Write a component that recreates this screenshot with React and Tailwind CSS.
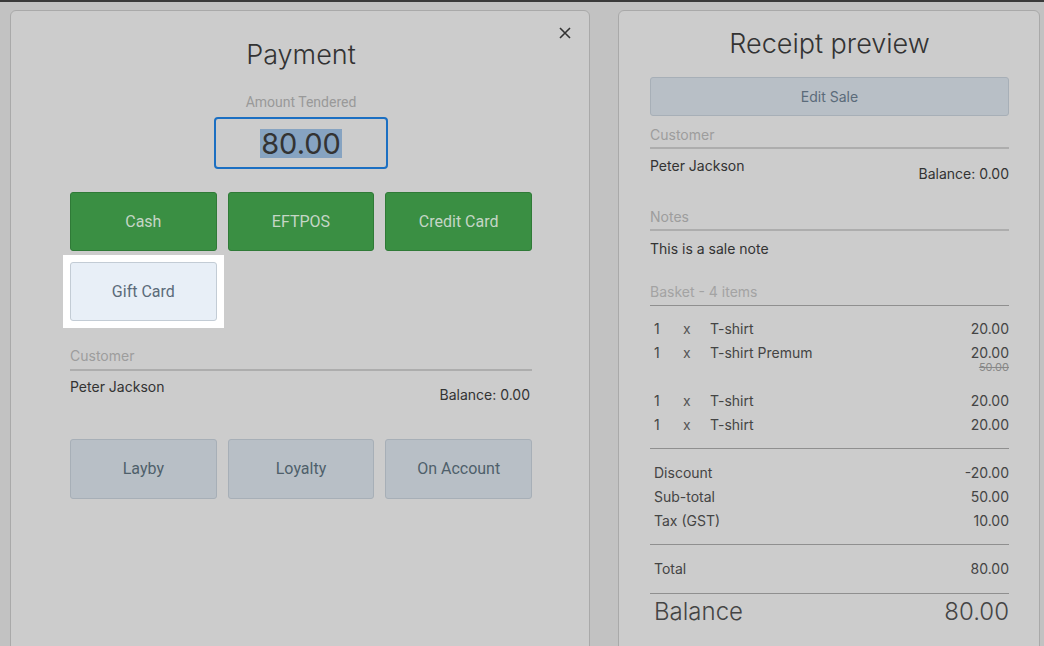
import React from "react";

const greenBtn =
  "h-[59px] rounded-[3px] bg-[#3a8f43] border border-[#2f7a37] text-[#c5d6c6] text-[16px] font-['Roboto',sans-serif] flex items-center justify-center";
const greyBtn =
  "h-[60px] rounded-[3px] bg-[#b8bfc6] border border-[#a7afb7] text-[#4f5f6b] text-[16px] font-['Roboto',sans-serif] flex items-center justify-center";

function Row({ qty, name, price, old }) {
  return (
    <div className="flex pl-[4px] text-[14px] text-[#444] leading-[24px]">
      <span className="w-[29px]">{qty}</span>
      <span className="w-[27px] text-[#555]">x</span>
      <span className="flex-1">{name}</span>
      <div className="flex flex-col items-end">
        <span>{price}</span>
        {old && (
          <span className="text-[11px] leading-[4px] text-[#888] line-through">{old}</span>
        )}
      </div>
    </div>
  );
}

function Line({ label, value }) {
  return (
    <div className="flex justify-between pl-[4px] text-[14px] text-[#444] leading-[24px]">
      <span>{label}</span>
      <span>{value}</span>
    </div>
  );
}

export default function App() {
  return (
    <div className="w-[1044px] h-[646px] overflow-hidden bg-[#c2c2c2] border-t-2 border-[#3a3a3a] font-['Inter',sans-serif]">
      <div className="flex gap-[28px] pl-[10px] pt-[8px]">
        {/* Payment panel */}
        <div className="relative w-[580px] h-[700px] rounded-[6px] bg-[#cccccc] border border-[#a9a9a9] pl-[2px] flex flex-col items-center">
          <button className="absolute right-[17px] top-[15px] w-[14px] h-[14px] flex items-center justify-center">
            <svg width="12" height="12" viewBox="0 0 12 12">
              <path d="M1 1 L11 11 M11 1 L1 11" stroke="#333" strokeWidth="1.6" />
            </svg>
          </button>
          <div className="mt-[28px] h-[32px] text-[27px] leading-[32px] font-light text-[#333]">Payment</div>
          <div className="mt-[21px] text-[14px] leading-[20px] text-[#999] font-['Roboto',sans-serif]">Amount Tendered</div>
          <div className="mt-[5px] w-[174px] h-[52px] rounded-[4px] border-2 border-[#1b6fc2] flex items-center justify-center">
            <span className="bg-[#86a3c1] text-[#333] text-[29px] leading-[29px] px-[1px]">80.00</span>
          </div>
          <div className="mt-[23px] w-[462px] grid grid-cols-3 gap-x-[11px] gap-y-[11px]">
            <div className={greenBtn}>Cash</div>
            <div className={greenBtn}>EFTPOS</div>
            <div className={greenBtn}>Credit Card</div>
            <div className="-m-[7px] bg-white p-[7px]">
              <div className="h-[59px] rounded-[3px] bg-[#e8eff7] border border-[#c3ccd5] text-[#5b6b7a] text-[16px] font-['Roboto',sans-serif] flex items-center justify-center">
                Gift Card
              </div>
            </div>
          </div>
          <div className="mt-[25px] w-[462px]">
            <div className="text-[14px] leading-[20px] text-[#9d9d9d] pb-[3px] border-b-2 border-[#adadad]">Customer</div>
            <div className="flex justify-between pt-[6px]">
              <span className="text-[14px] leading-[20px] text-[#333]">Peter Jackson</span>
              <span className="mt-[8px] pr-[2px] text-[14px] leading-[20px] text-[#333]">Balance: 0.00</span>
            </div>
          </div>
          <div className="mt-[34px] w-[462px] grid grid-cols-3 gap-x-[11px]">
            <div className={greyBtn}>Layby</div>
            <div className={greyBtn}>Loyalty</div>
            <div className={greyBtn}>On Account</div>
          </div>
        </div>

        {/* Receipt panel */}
        <div className="w-[422px] h-[700px] rounded-[6px] bg-[#cccccc] border border-[#a9a9a9] pl-[31px] pr-[30px] flex flex-col">
          <div className="mt-[17px] h-[32px] text-center text-[27px] leading-[32px] font-light text-[#333]">Receipt preview</div>
          <div className="mt-[17px] h-[39px] rounded-[3px] bg-[#b8bfc6] border border-[#a7afb7] text-[#5b6b7a] text-[14px] flex items-center justify-center">
            Edit Sale
          </div>
          <div className="mt-[9px] text-[14px] leading-[20px] text-[#9d9d9d] pb-[2px] border-b-2 border-[#adadad]">Customer</div>
          <div className="flex justify-between pt-[7px]">
            <span className="text-[14px] leading-[20px] text-[#333]">Peter Jackson</span>
            <span className="mt-[8px] text-[14px] leading-[20px] text-[#333]">Balance: 0.00</span>
          </div>
          <div className="mt-[23px] text-[14px] leading-[20px] text-[#9d9d9d] pb-[2px] border-b-2 border-[#adadad]">Notes</div>
          <div className="pt-[8px] text-[14px] leading-[20px] text-[#333]">This is a sale note</div>
          <div className="mt-[23px] text-[14px] leading-[20px] text-[#a3a3a3] pb-[3px] border-b border-[#8f8f8f]">Basket - 4 items</div>
          <div className="pt-[11px]">
            <Row qty="1" name="T-shirt" price="20.00" />
            <Row qty="1" name="T-shirt Premum" price="20.00" old="50.00" />
            <div className="h-[20px]" />
            <Row qty="1" name="T-shirt" price="20.00" />
            <Row qty="1" name="T-shirt" price="20.00" />
          </div>
          <div className="mt-[11px] border-t border-[#8f8f8f] pt-[12px]">
            <Line label="Discount" value="-20.00" />
            <Line label="Sub-total" value="50.00" />
            <Line label="Tax (GST)" value="10.00" />
          </div>
          <div className="mt-[11px] border-t border-[#8f8f8f] pt-[12px]">
            <Line label="Total" value="80.00" />
          </div>
          <div className="mt-[12px] border-t border-[#8f8f8f] pt-[3px] flex justify-between pl-[4px] text-[24px] leading-[30px] font-light text-[#444]">
            <span>Balance</span>
            <span>80.00</span>
          </div>
        </div>
      </div>
    </div>
  );
}
